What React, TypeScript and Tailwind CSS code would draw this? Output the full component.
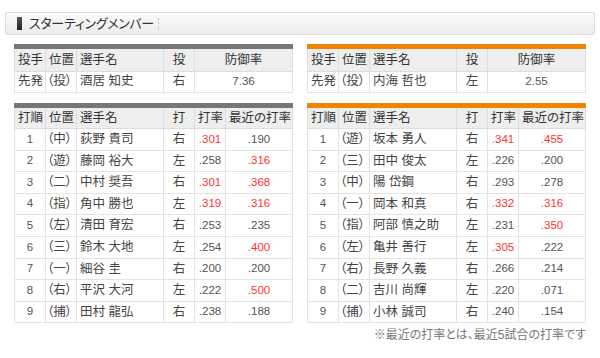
import React from "react";

type Bat = { o: string; pos: string; name: string; h: string; avg: string; avgRed: boolean; rec: string; recRed: boolean; visited?: boolean };

const left: Bat[] = [
  { o: "1", pos: "（中）", name: "荻野 貴司", h: "右", avg: ".301", avgRed: true, rec: ".190", recRed: false },
  { o: "2", pos: "（遊）", name: "藤岡 裕大", h: "左", avg: ".258", avgRed: false, rec: ".316", recRed: true },
  { o: "3", pos: "（二）", name: "中村 奨吾", h: "右", avg: ".301", avgRed: true, rec: ".368", recRed: true },
  { o: "4", pos: "（指）", name: "角中 勝也", h: "左", avg: ".319", avgRed: true, rec: ".316", recRed: true },
  { o: "5", pos: "（左）", name: "清田 育宏", h: "右", avg: ".253", avgRed: false, rec: ".235", recRed: false },
  { o: "6", pos: "（三）", name: "鈴木 大地", h: "左", avg: ".254", avgRed: false, rec: ".400", recRed: true },
  { o: "7", pos: "（一）", name: "細谷 圭", h: "右", avg: ".200", avgRed: false, rec: ".200", recRed: false },
  { o: "8", pos: "（右）", name: "平沢 大河", h: "左", avg: ".222", avgRed: false, rec: ".500", recRed: true },
  { o: "9", pos: "（捕）", name: "田村 龍弘", h: "右", avg: ".238", avgRed: false, rec: ".188", recRed: false },
];

const right: Bat[] = [
  { o: "1", pos: "（遊）", name: "坂本 勇人", h: "右", avg: ".341", avgRed: true, rec: ".455", recRed: true },
  { o: "2", pos: "（三）", name: "田中 俊太", h: "左", avg: ".226", avgRed: false, rec: ".200", recRed: false },
  { o: "3", pos: "（中）", name: "陽 岱鋼", h: "右", avg: ".293", avgRed: false, rec: ".278", recRed: false },
  { o: "4", pos: "（一）", name: "岡本 和真", h: "右", avg: ".332", avgRed: true, rec: ".316", recRed: true },
  { o: "5", pos: "（指）", name: "阿部 慎之助", h: "左", avg: ".231", avgRed: false, rec: ".350", recRed: true },
  { o: "6", pos: "（左）", name: "亀井 善行", h: "左", avg: ".305", avgRed: true, rec: ".222", recRed: false },
  { o: "7", pos: "（右）", name: "長野 久義", h: "右", avg: ".266", avgRed: false, rec: ".214", recRed: false },
  { o: "8", pos: "（二）", name: "吉川 尚輝", h: "左", avg: ".220", avgRed: false, rec: ".071", recRed: false },
  { o: "9", pos: "（捕）", name: "小林 誠司", h: "右", avg: ".240", avgRed: false, rec: ".154", recRed: false, visited: true },
];

const th = "border border-[#dddddd] bg-[#eeeeee] font-normal text-[#333333] text-[12.5px] px-[3px] leading-none whitespace-nowrap border-t-0";
const td = "border border-[#e3e3e3] bg-white text-[#444444] px-[3px] leading-none whitespace-nowrap";
const jp = "text-[12.5px]";
const num = "text-[11.5px] text-center text-[#555555]";

function PitcherTable({ bar, name, hand, era }: { bar: string; name: string; hand: string; era: string }) {
  return (
    <div className={`border-t-[5px] ${bar}`}>
      <table className="w-full table-fixed border-collapse">
        <colgroup>
          <col className="w-[31px]" />
          <col className="w-[31px]" />
          <col className="w-[87px]" />
          <col className="w-[31px]" />
          <col />
        </colgroup>
        <thead>
          <tr className="h-[22px]">
            <th className={`${th} text-left`}>投手</th>
            <th className={`${th} text-left`}>位置</th>
            <th className={`${th} text-left`}>選手名</th>
            <th className={`${th} text-center`}>投</th>
            <th className={`${th} text-center`}>防御率</th>
          </tr>
        </thead>
        <tbody>
          <tr className="h-[21px]">
            <td className={`${td} ${jp}`}>先発</td>
            <td className={`${td} ${jp} pl-[1px]`}>（投）</td>
            <td className={`${td} ${jp} text-[#2a7ab6]`}>{name}</td>
            <td className={`${td} ${jp} text-center`}>{hand}</td>
            <td className={`${td} ${num}`}>{era}</td>
          </tr>
        </tbody>
      </table>
    </div>
  );
}

function BatTable({ bar, rows }: { bar: string; rows: Bat[] }) {
  return (
    <div className={`border-t-[5px] ${bar}`}>
      <table className="w-full table-fixed border-collapse">
        <colgroup>
          <col className="w-[31px]" />
          <col className="w-[31px]" />
          <col className="w-[87px]" />
          <col className="w-[31px]" />
          <col className="w-[31px]" />
          <col />
        </colgroup>
        <thead>
          <tr className="h-[21px]">
            <th className={`${th} text-left`}>打順</th>
            <th className={`${th} text-left`}>位置</th>
            <th className={`${th} text-left`}>選手名</th>
            <th className={`${th} text-center`}>打</th>
            <th className={`${th} text-center px-0`}>打率</th>
            <th className={`${th} text-center px-0`}>最近の打率</th>
          </tr>
        </thead>
        <tbody>
          {rows.map((r) => (
            <tr key={r.o} className="h-[21.6px]">
              <td className={`${td} ${num}`}>{r.o}</td>
              <td className={`${td} ${jp} pl-[1px]`}>{r.pos}</td>
              <td className={`${td} ${jp} ${r.visited ? "text-[#6b3f9e]" : "text-[#2a7ab6]"}`}>{r.name}</td>
              <td className={`${td} ${jp} text-center`}>{r.h}</td>
              <td className={`${td} ${num} ${r.avgRed ? "!text-[#ff3333]" : ""}`}>{r.avg}</td>
              <td className={`${td} ${num} ${r.recRed ? "!text-[#ff3333]" : ""}`}>{r.rec}</td>
            </tr>
          ))}
        </tbody>
      </table>
    </div>
  );
}

export default function App() {
  return (
    <div
      className="w-[600px] h-[358px] bg-white overflow-hidden"
      style={{ fontFamily: '"Liberation Sans", "Noto Sans CJK JP", sans-serif', fontFeatureSettings: '"palt"' }}
    >
      <div className="pt-[12px] px-[5px]">
        <div className="h-[23px] border border-[#dddddd] rounded-[2px] bg-gradient-to-b from-[#fbfbfb] to-[#ececec] flex items-center pl-[11px]">
          <div className="w-[5px] h-[13px] bg-gradient-to-b from-[#555555] to-[#222222]" />
          <span className="ml-[7px] text-[13px] text-[#333333] leading-none tracking-[-0.3px]">
            スターティングメンバー
          </span>
          <div className="ml-[4px] h-[12px] border-l border-dotted border-[#bbbbbb]" />
        </div>
      </div>
      <div className="flex gap-[14px] px-[14px] pt-[9px]">
        <div className="w-[279px] flex flex-col gap-[10px]">
          <PitcherTable bar="border-[#777777]" name="酒居 知史" hand="右" era="7.36" />
          <BatTable bar="border-[#777777]" rows={left} />
        </div>
        <div className="w-[279px] flex flex-col gap-[10px]">
          <PitcherTable bar="border-[#f08300]" name="内海 哲也" hand="左" era="2.55" />
          <BatTable bar="border-[#f08300]" rows={right} />
          <div className="text-right text-[12px] text-[#777777] leading-none -mt-[4px]">
            ※最近の打率とは、最近5試合の打率です
          </div>
        </div>
      </div>
    </div>
  );
}
